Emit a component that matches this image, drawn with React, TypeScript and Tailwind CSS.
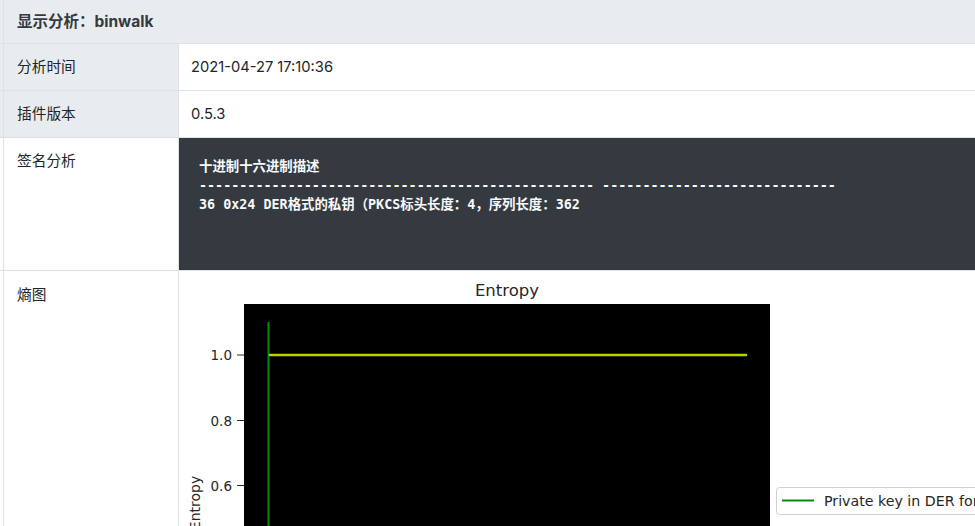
import React from "react";

const sans = "font-['Inter','Noto_Sans_CJK_SC',sans-serif]";

function EntropyChart() {
  return (
    <svg width="900" height="260" viewBox="0 0 900 260" className="block" style={{ fontFamily: "'DejaVu Sans', sans-serif" }}>
      <text x="328" y="25" textAnchor="middle" fontSize="16.5" fill="#262626">Entropy</text>
      <rect x="65" y="33" width="526" height="300" fill="#000" />
      {[
        { y: 84, l: "1.0" },
        { y: 149.5, l: "0.8" },
        { y: 214.5, l: "0.6" },
      ].map((t) => (
        <g key={t.l}>
          <line x1="58" x2="65" y1={t.y} y2={t.y} stroke="#262626" strokeWidth="1" />
          <text x="53" y={t.y + 5} textAnchor="end" fontSize="13.5" fill="#262626">{t.l}</text>
        </g>
      ))}
      <line x1="89.5" x2="89.5" y1="51" y2="260" stroke="#0a8a0a" strokeWidth="2" />
      <line x1="91" x2="567" y1="84" y2="84" stroke="#bdd000" strokeWidth="2.5" strokeLinecap="round" />
      <text transform="translate(21 232) rotate(-90)" textAnchor="middle" fontSize="14" fill="#262626">Entropy</text>
      <rect x="597.5" y="216.5" width="260" height="27" rx="3" fill="#fff" stroke="#d0d0d0" />
      <line x1="603" x2="635" y1="229.5" y2="229.5" stroke="#0a8a0a" strokeWidth="2" />
      <text x="645" y="234.5" fontSize="14.2" fill="#262626">Private key in DER format</text>
    </svg>
  );
}

export default function App() {
  const dashes = "-".repeat(49) + " " + "-".repeat(29);
  const leftGray = "shadow-[inset_3px_0_0_#e9ecef,inset_4px_0_0_#dee2e6] bg-[#e9ecef]";
  const leftWhite = "shadow-[inset_3px_0_0_#ffffff,inset_4px_0_0_#dee2e6] bg-white";
  return (
    <div className={`w-[975px] h-[526px] overflow-hidden bg-white text-[#212529] text-[14.7px] ${sans}`}>
      <div className="w-[1100px]">
        <div className="h-[43px] bg-[#e9ecef] shadow-[inset_3px_0_0_#e9ecef,inset_4px_0_0_#dee2e6] flex items-center pl-[17px] font-bold text-[15.5px] text-[#343a40]">
          显示分析：binwalk
        </div>
        <div className="grid grid-cols-[179px_1fr] h-[47px] border-t border-[#dee2e6]">
          <div className={`${leftGray} border-r border-[#dee2e6] pl-[17px] flex items-center`}>分析时间</div>
          <div className="pl-[12px] flex items-center">2021-04-27 17:10:36</div>
        </div>
        <div className="grid grid-cols-[179px_1fr] h-[47px] border-t border-[#dee2e6]">
          <div className={`${leftGray} border-r border-[#dee2e6] pl-[17px] flex items-center`}>插件版本</div>
          <div className="pl-[12px] flex items-center">0.5.3</div>
        </div>
        <div className="grid grid-cols-[179px_1fr] h-[133px] border-t border-[#dee2e6]">
          <div className={`${leftWhite} border-r border-[#dee2e6] pl-[17px] pt-[12px]`}>签名分析</div>
          <pre className="m-0 bg-[#343a40] text-[#f8f9fa] pl-[20px] pt-[19px] text-[13.4px] leading-[19px] font-bold font-['DejaVu_Sans_Mono','Noto_Sans_CJK_SC',monospace]">
{`十进制十六进制描述
${dashes}
36 0x24 DER格式的私钥（PKCS标头长度：4，序列长度：362`}
          </pre>
        </div>
        <div className="grid grid-cols-[179px_1fr] h-[300px] border-t border-[#dee2e6]">
          <div className={`${leftWhite} border-r border-[#dee2e6] pl-[17px] pt-[13px]`}>熵图</div>
          <div>
            <EntropyChart />
          </div>
        </div>
      </div>
    </div>
  );
}
